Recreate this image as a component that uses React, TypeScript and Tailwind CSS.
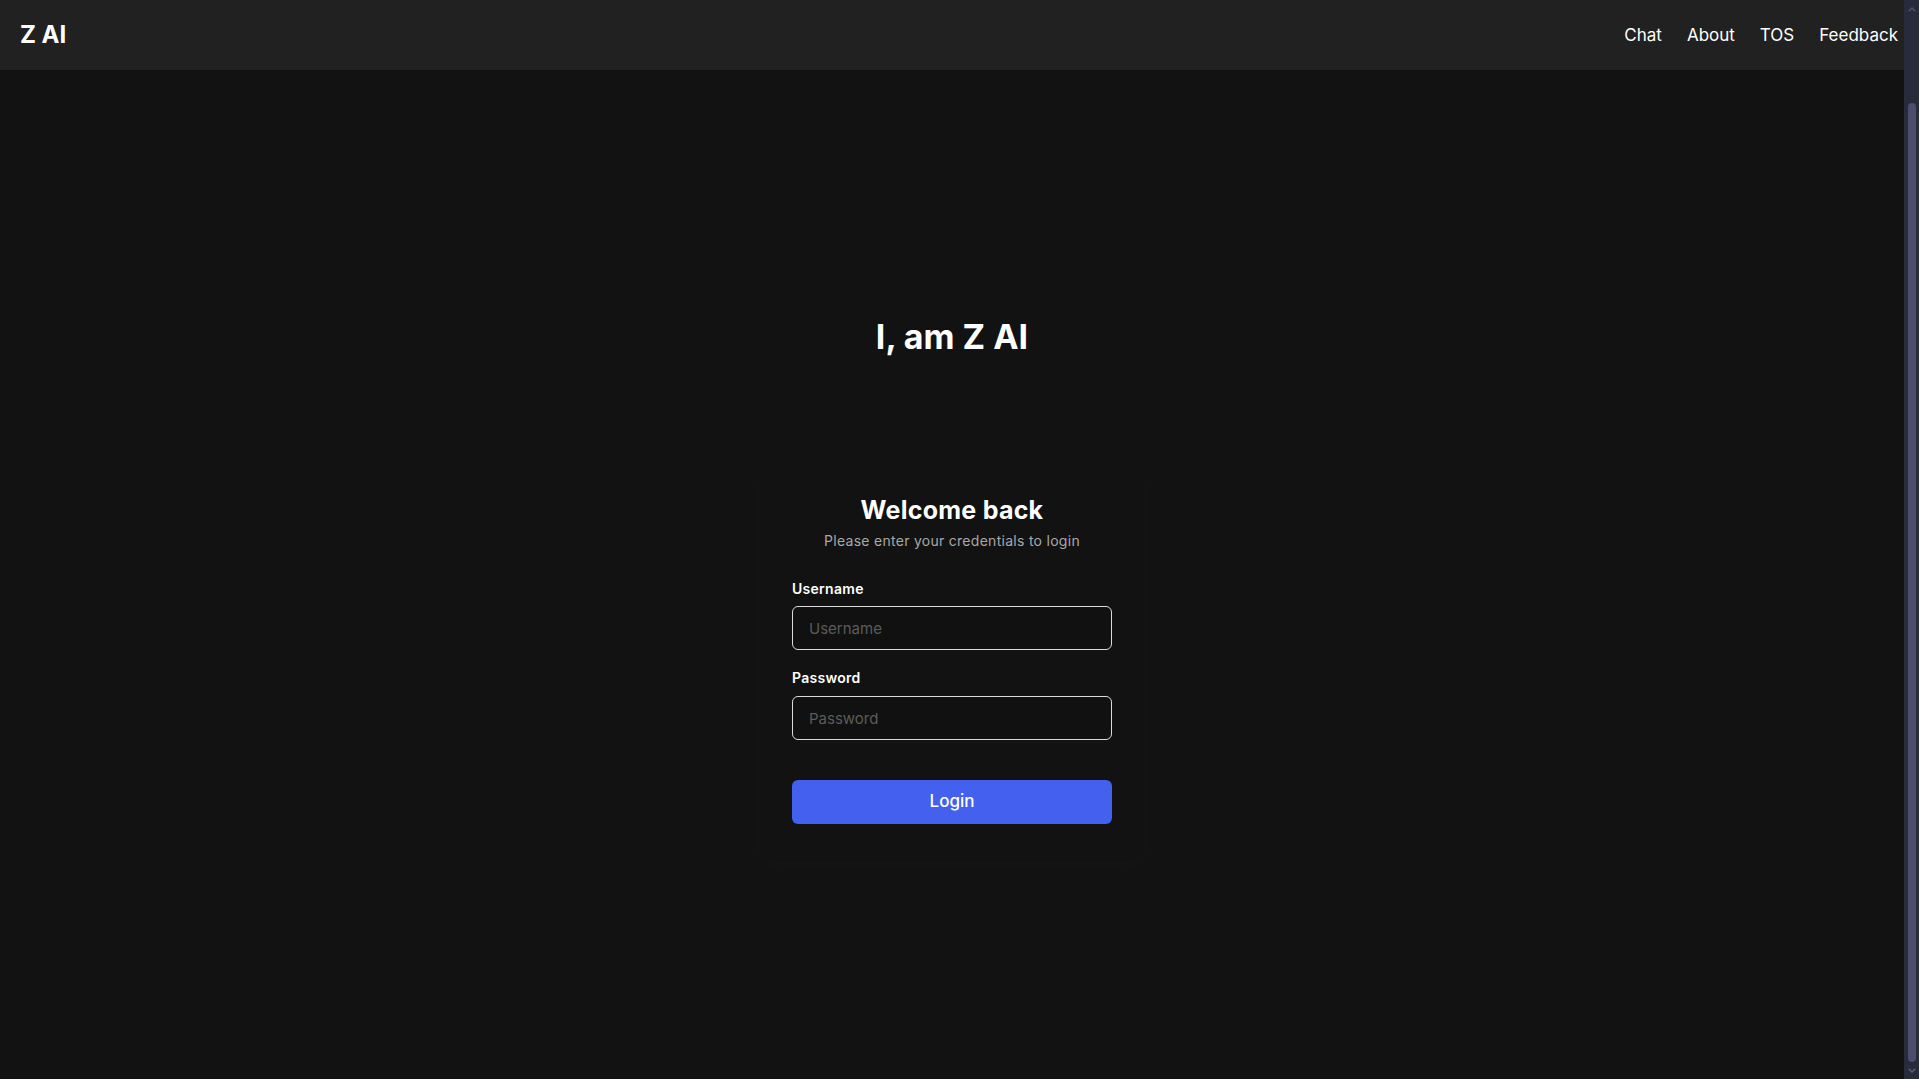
import { useState } from 'react'

const links = ['Chat', 'About', 'TOS', 'Feedback']

function Navbar() {
    return (
        <nav className="flex h-[70px] shrink-0 items-center justify-between bg-[#212121] pl-5 pr-[6px]">
            <span className="text-2xl font-bold text-white">Z AI</span>
            <div className="flex items-center gap-[25px] pt-[2px]">
                {links.map((l) => (
                    <a key={l} href="#" className="text-[17px] text-white">
                        {l}
                    </a>
                ))}
            </div>
        </nav>
    )
}

// the page's own scrollbar (dark, bluish), scrolled to the bottom
function Scrollbar() {
    return (
        <aside className="flex w-[15px] shrink-0 flex-col bg-[#282b3b]">
            <div className="flex h-[17px] items-center justify-center">
                <svg width="8" height="6" viewBox="0 0 8 6">
                    <path d="M0 5 L4 1 L8 5 L6.5 5.5 L4 3 L1.5 5.5 Z" fill="#4d5172" />
                </svg>
            </div>
            <div className="flex flex-1 flex-col items-center justify-end">
                <div className="h-[959px] w-[8px] rounded-full bg-[#4a4d6b]" />
            </div>
            <div className="flex h-[17px] items-center justify-center">
                <svg width="8" height="6" viewBox="0 0 8 6">
                    <path d="M0 1 L4 5 L8 1 L6.5 0.5 L4 3 L1.5 0.5 Z" fill="#5a5e80" />
                </svg>
            </div>
        </aside>
    )
}

function LoginCard() {
    const [username, setUsername] = useState('')
    const [password, setPassword] = useState('')
    return (
        <div className="mt-[105px] flex w-[384px] flex-col rounded-lg px-8 pt-8 pb-[38px] shadow-[0_6px_24px_rgba(255,255,255,0.02)]">
            <h2 className="text-center text-[25px] leading-8 font-bold tracking-[0.01em] text-white">Welcome back</h2>
            <p className="mt-[5px] text-center text-sm leading-5 tracking-[0.02em] text-[#a8a8a8]">
                Please enter your credentials to login
            </p>
            <label className="mt-7 text-sm leading-5 font-semibold tracking-[0.02em] text-white">Username</label>
            <input
                value={username}
                onChange={(e) => setUsername(e.target.value)}
                placeholder="Username"
                className="mt-[7px] h-[44px] rounded-md border border-[#dcdcdc] bg-[#111111] px-4 text-[15px] text-white outline-none placeholder:text-[#5c5c5c]"
            />
            <label className="mt-[18px] text-sm leading-5 font-semibold tracking-[0.02em] text-white">Password</label>
            <input
                type="password"
                value={password}
                onChange={(e) => setPassword(e.target.value)}
                placeholder="Password"
                className="mt-2 h-[44px] rounded-md border border-[#dcdcdc] bg-[#111111] px-4 text-[15px] text-white outline-none placeholder:text-[#5c5c5c]"
            />
            <button className="mt-10 h-[44px] rounded-md bg-[#4361ee] text-[17px] font-medium text-white">
                Login
            </button>
        </div>
    )
}

function App() {
    return (
        <div className="flex h-screen overflow-hidden bg-[#121212] font-['Inter',sans-serif]">
            <div className="flex min-w-0 flex-1 flex-col">
                <Navbar />
                <main className="flex flex-1 flex-col items-center pt-[247px]">
                    <h1 className="text-[34px] leading-10 font-bold text-white">I, am Z AI</h1>
                    <LoginCard />
                </main>
            </div>
            <Scrollbar />
        </div>
    )
}

export default App
